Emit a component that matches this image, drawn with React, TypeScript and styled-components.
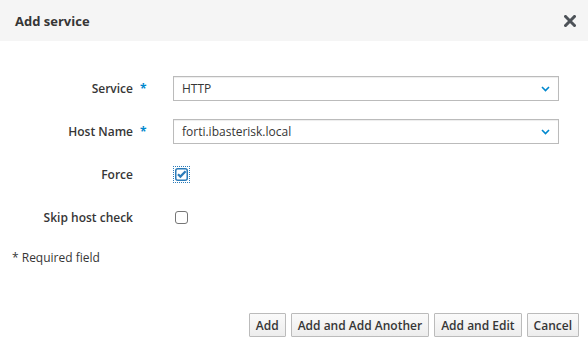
import React from "react";
import styled, { createGlobalStyle } from "styled-components";

const GlobalStyle = createGlobalStyle`
  html, body {
    margin: 0;
    padding: 0;
    background: #fff;
  }
  body {
    font-family: "Open Sans", "Liberation Sans", sans-serif;
    font-size: 12px;
    color: #363636;
  }
`;

type Field = {
  label: string;
  required?: boolean;
  kind: "select" | "checkbox";
  value?: string;
  checked?: boolean;
  focused?: boolean;
};

const fields: Field[] = [
  { label: "Service", required: true, kind: "select", value: "HTTP" },
  { label: "Host Name", required: true, kind: "select", value: "forti.ibasterisk.local" },
  { label: "Force", kind: "checkbox", checked: true, focused: true },
  { label: "Skip host check", kind: "checkbox" },
];

const Chevron = () => (
  <svg width="9" height="6" viewBox="0 0 9 6">
    <path d="M1 1l3.5 3.5L8 1" fill="none" stroke="#0088ce" strokeWidth="1.6" />
  </svg>
);

const CloseIcon = () => (
  <svg width="12" height="12" viewBox="0 0 12 12">
    <path d="M1.5 1.5l9 9M10.5 1.5l-9 9" stroke="#4d5258" strokeWidth="3" strokeLinecap="square" />
  </svg>
);

const CheckIcon = () => (
  <svg width="13" height="13" viewBox="0 0 13 13">
    <rect x="0.75" y="0.75" width="11.5" height="11.5" rx="2" fill="#fff" stroke="#2b7bb9" strokeWidth="1.5" />
    <path d="M3 6.2l2.4 2.4L10.6 3.2" fill="none" stroke="#2b7bb9" strokeWidth="2.2" />
  </svg>
);

const App: React.FC = () => {
  return (
    <Modal>
      <GlobalStyle />
      <Header>
        <Title>Add service</Title>
        <CloseButton aria-label="Close">
          <CloseIcon />
        </CloseButton>
      </Header>
      <Body>
        <Form>
          {fields.map((f) => (
            <Row key={f.label}>
              <Label>
                {f.label}
                {f.required && <Star>*</Star>}
              </Label>
              <Control>
                {f.kind === "select" ? (
                  <Select>
                    <span>{f.value}</span>
                    <Chevron />
                  </Select>
                ) : (
                  <CheckboxWrap $focused={f.focused}>
                    {f.checked ? <CheckIcon /> : <EmptyBox />}
                  </CheckboxWrap>
                )}
              </Control>
            </Row>
          ))}
        </Form>
        <RequiredNote>* Required field</RequiredNote>
      </Body>
      <Footer>
        <Button>Add</Button>
        <Button>Add and Add Another</Button>
        <Button>Add and Edit</Button>
        <Button>Cancel</Button>
      </Footer>
    </Modal>
  );
};

export default App;

const Modal = styled.div`
  width: 588px;
  height: 346px;
  display: flex;
  flex-direction: column;
  background: #fff;
`;

const Header = styled.div`
  height: 41px;
  background: #f5f5f5;
  display: flex;
  align-items: center;
  justify-content: space-between;
  padding: 0 12px 0 15px;
  box-sizing: border-box;
`;

const Title = styled.h4`
  margin: 0;
  font-size: 13px;
  font-weight: 700;
  color: #363636;
`;

const CloseButton = styled.button`
  border: none;
  background: none;
  padding: 0;
  display: flex;
  cursor: pointer;
`;

const Body = styled.div`
  flex: 1;
  padding: 35px 29px 0 12px;
  display: flex;
  flex-direction: column;
`;

const Form = styled.div`
  display: flex;
  flex-direction: column;
  gap: 18px;
`;

const Row = styled.div`
  display: grid;
  grid-template-columns: 161px 1fr;
  height: 25px;
  align-items: center;
`;

const Label = styled.label`
  font-weight: 600;
  text-align: right;
  padding-right: 40px;
  white-space: nowrap;
`;

const Star = styled.span`
  color: #0088ce;
  font-weight: 700;
  margin-left: 7px;
  display: inline-block;
  width: 6px;
  margin-right: -13px;
`;

const Control = styled.div`
  display: flex;
  align-items: center;
`;

const Select = styled.div`
  width: 100%;
  height: 25px;
  box-sizing: border-box;
  border: 1px solid #bbb;
  box-shadow: inset 0 1px 1px rgba(3, 3, 3, 0.075);
  background: #fff;
  display: flex;
  align-items: center;
  justify-content: space-between;
  padding: 0 8px 0 8px;
  color: #363636;
`;

const CheckboxWrap = styled.div<{ $focused?: boolean }>`
  display: flex;
  margin-left: 1px;
  padding: 1px;
  outline: ${(p) => (p.$focused ? "1px dotted #2b7bb9" : "none")};
`;

const EmptyBox = styled.span`
  width: 11px;
  height: 11px;
  border: 1px solid #767676;
  border-radius: 3px;
  background: #fff;
`;

const RequiredNote = styled.div`
  margin-top: 19px;
`;

const Footer = styled.div`
  display: flex;
  justify-content: flex-end;
  gap: 5px;
  padding: 0 9px 9px 0;
`;

const Button = styled.button`
  height: 24px;
  padding: 0 6px;
  font-family: "Open Sans", "Liberation Sans", sans-serif;
  font-size: 12px;
  font-weight: 600;
  color: #363636;
  background: linear-gradient(#fafafa, #ededed);
  border: 1px solid #bbb;
  border-radius: 1px;
  cursor: pointer;
`;
